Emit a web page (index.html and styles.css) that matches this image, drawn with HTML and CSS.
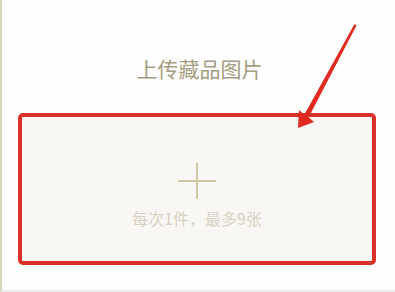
FILE: index.html
```html
<!DOCTYPE html>
<html lang="zh">
<head>
<meta charset="utf-8">
<link rel="stylesheet" href="styles.css">
</head>
<body>
<div class="page">
  <h1 class="title">上传藏品图片</h1>
  <div class="upload">
    <svg class="plus" width="38" height="36" viewBox="0 0 38 36">
      <line x1="0" y1="18" x2="38" y2="18" stroke="#d3c6a8" stroke-width="2"/>
      <line x1="19" y1="0" x2="19" y2="36" stroke="#d3c6a8" stroke-width="2"/>
    </svg>
    <div class="hint">每次1件，最多9张</div>
  </div>
  <svg class="arrow" width="395" height="292" viewBox="0 0 395 292">
    <polygon points="354.5,24 356.5,25.5 308.7,117.2 314,122 298,128 299,110 304.3,114.8" fill="#e02a20"/>
  </svg>
</div>
</body>
</html>
```

FILE: styles.css
```css
html, body {
  margin: 0;
  padding: 0;
  background: #ffffff;
}
.page {
  position: relative;
  width: 395px;
  height: 292px;
  box-sizing: border-box;
  border-left: 2px solid #d9d6b8;
  border-bottom: 2px solid #ececec;
  background: #fefefe;
  font-family: "Noto Sans CJK SC", "Noto Sans", sans-serif;
  padding-top: 56px;
  overflow: hidden;
}
.title {
  margin: 0;
  font-size: 21px;
  line-height: 24px;
  font-weight: 400;
  color: #a69d80;
  text-align: center;
  padding-left: 2px;
}
.upload {
  margin: 33px 0 0 16px;
  width: 358px;
  height: 152px;
  box-sizing: border-box;
  border: 4px solid #d9312a;
  border-radius: 5px;
  background: #f9f7f3;
  display: flex;
  flex-direction: column;
  align-items: center;
  padding-top: 46px;
}
.plus {
  display: block;
}
.hint {
  margin-top: 9px;
  font-size: 16px;
  line-height: 20px;
  color: #d8d1c2;
}
.arrow {
  position: absolute;
  left: -2px;
  top: 0;
  pointer-events: none;
}
```
